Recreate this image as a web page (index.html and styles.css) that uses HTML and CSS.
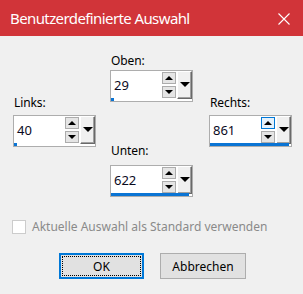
FILE: index.html
```html
<!DOCTYPE html>
<html lang="de">
<head>
<meta charset="utf-8">
<link rel="stylesheet" href="styles.css">
</head>
<body>
<div class="dialog">
  <div class="titlebar">
    <span class="title">Benutzerdefinierte Auswahl</span>
    <svg class="close" width="12" height="12" viewBox="0 0 12 12"><path d="M0.5 0.5 L11.5 11.5 M11.5 0.5 L0.5 11.5" stroke="#fff" stroke-width="1.1" fill="none"/></svg>
  </div>
  <div class="fields">
    <div class="col col1">
      <div class="label lbl-side">Links:</div>
      <div class="spin">
        <div class="row">
          <div class="val">40</div>
          <div class="arrows">
            <div class="ab up"><span class="tri-up"></span></div>
            <div class="ab down"><span class="tri-down"></span></div>
          </div>
          <div class="drop"><span class="tri-drop"></span></div>
        </div>
        <div class="bar"><div class="fill" style="width:3px"></div></div>
      </div>
    </div>
    <div class="col col2">
      <div class="label lbl-top">Oben:</div>
      <div class="spin">
        <div class="row">
          <div class="val">29</div>
          <div class="arrows">
            <div class="ab up"><span class="tri-up"></span></div>
            <div class="ab down"><span class="tri-down"></span></div>
          </div>
          <div class="drop"><span class="tri-drop"></span></div>
        </div>
        <div class="bar"><div class="fill" style="width:3px"></div></div>
      </div>
      <div class="label lbl-bottom">Unten:</div>
      <div class="spin">
        <div class="row">
          <div class="val">622</div>
          <div class="arrows">
            <div class="ab up"><span class="tri-up"></span></div>
            <div class="ab down"><span class="tri-down"></span></div>
          </div>
          <div class="drop"><span class="tri-drop"></span></div>
        </div>
        <div class="bar"><div class="fill" style="width:78px"></div></div>
      </div>
    </div>
    <div class="col col3">
      <div class="label lbl-side">Rechts:</div>
      <div class="spin">
        <div class="row">
          <div class="val">861</div>
          <div class="arrows">
            <div class="ab up hot"><span class="tri-up"></span></div>
            <div class="ab down"><span class="tri-down"></span></div>
          </div>
          <div class="drop"><span class="tri-drop"></span></div>
        </div>
        <div class="bar"><div class="fill" style="width:79px"></div></div>
      </div>
    </div>
  </div>
  <label class="check">
    <span class="box"></span>
    <span class="check-text">Aktuelle Auswahl als Standard verwenden</span>
  </label>
  <div class="buttons">
    <button class="btn ok"><span class="focus">OK</span></button>
    <button class="btn">Abbrechen</button>
  </div>
</div>
</body>
</html>
```
FILE: styles.css
```css
* { box-sizing: border-box; }
html, body { margin: 0; padding: 0; }
body {
  width: 303px;
  height: 294px;
  background: #f0f0f0;
  font-family: "Noto Sans", "Open Sans", "DejaVu Sans", sans-serif;
  font-size: 12px;
  color: #000;
  overflow: hidden;
}
.titlebar {
  height: 36px;
  background: #d13439;
  display: flex;
  align-items: center;
  justify-content: space-between;
  padding: 0 13px 0 10px;
}
.title {
  color: #fff;
  font-size: 15px;
  letter-spacing: -0.6px;
  padding-bottom: 1px;
}
.close { display: block; margin-top: 1px; }

.fields {
  display: flex;
  padding-left: 13px;
}
.col { display: flex; flex-direction: column; }
.col1 { width: 97px; }
.col2 { width: 99px; }
.col3 { width: 94px; }

.label {
  height: 16px;
  line-height: 16px;
  padding-left: 1px;
  letter-spacing: -0.1px;
}
.lbl-top { margin-top: 17px; margin-bottom: 1px; }
.lbl-side { margin-top: 59px; margin-bottom: 4px; }
.lbl-bottom { margin-top: 41px; margin-bottom: 6px; }

.spin {
  width: 83px;
  height: 32px;
  border: 1px solid #adadad;
  background: #fff;
  display: flex;
  flex-direction: column;
}
.row {
  display: flex;
  height: 27px;
}
.val {
  flex: 1;
  padding-left: 3px;
  padding-top: 4px;
  font-size: 13px;
  line-height: 20px;
  color: #0a0a1e;
}
.arrows {
  width: 15px;
  padding-top: 1px;
  display: flex;
  flex-direction: column;
  gap: 2px;
}
.ab {
  width: 14px;
  height: 13px;
  background: #e5e5e5;
  border: 1px solid #acacac;
  display: flex;
  align-items: center;
  justify-content: center;
}
.ab.down { height: 12px; }
.ab.hot { background: #e5f1fb; border-color: #0078d7; }
.tri-up {
  width: 0; height: 0;
  border-left: 4px solid transparent;
  border-right: 4px solid transparent;
  border-bottom: 4px solid #000;
}
.tri-down {
  width: 0; height: 0;
  border-left: 4px solid transparent;
  border-right: 4px solid transparent;
  border-top: 4px solid #000;
}
.drop {
  width: 15px;
  height: 28px;
  background: #f0f0f0;
  border-top: 1px solid #fff;
  border-left: 1px solid #fff;
  border-right: 1px solid #696969;
  border-bottom: 1px solid #696969;
  box-shadow: inset -1px -1px 0 #a0a0a0;
  display: flex;
  justify-content: center;
  padding-top: 10px;
}
.tri-drop {
  width: 0; height: 0;
  border-left: 5px solid transparent;
  border-right: 5px solid transparent;
  border-top: 5px solid #000;
}
.bar {
  height: 3px;
  margin-top: auto;
}
.fill {
  height: 3px;
  background: #0a74d4;
}

.check {
  display: flex;
  align-items: center;
  margin-top: 21px;
  padding-left: 12px;
  gap: 6px;
}
.box {
  width: 14px;
  height: 14px;
  border: 1px solid #cccccc;
  background: #fff;
}
.check-text {
  color: #8a8a8a;
}
.buttons {
  display: flex;
  gap: 16px;
  padding-left: 59px;
  margin-top: 18px;
}
.btn {
  width: 86px;
  height: 26px;
  padding: 0;
  margin: 0;
  background: #e1e1e1;
  border: 1px solid #adadad;
  font-family: inherit;
  font-size: 12px;
  color: #000;
  display: flex;
  align-items: center;
  justify-content: center;
}
.btn.ok {
  width: 85px;
  border: 2px solid #0078d7;
  padding: 1px;
}
.focus {
  flex: 1;
  align-self: stretch;
  display: flex;
  align-items: center;
  justify-content: center;
  border: 1px dotted #000;
}
```
